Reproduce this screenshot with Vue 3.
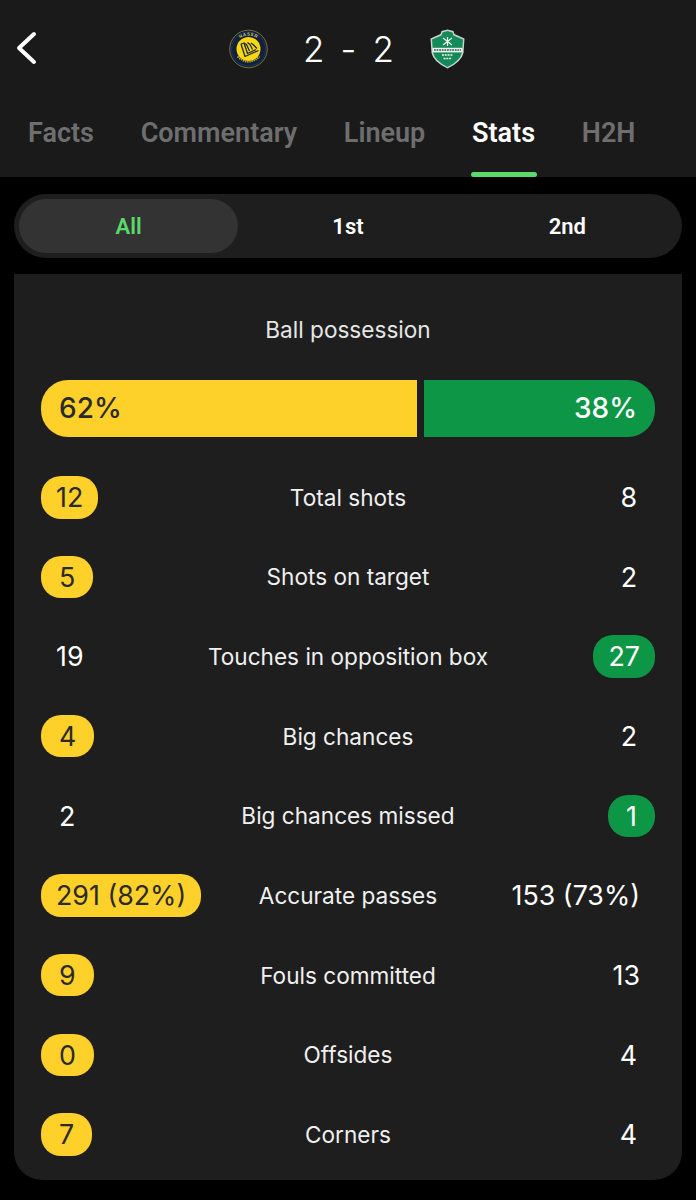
<script setup>
const tabs = [
  { label: 'Facts' },
  { label: 'Commentary' },
  { label: 'Lineup' },
  { label: 'Stats', active: true },
  { label: 'H2H' },
]
const periods = [{ label: 'All', active: true }, { label: '1st' }, { label: '2nd' }]
const rows = [
  { name: 'Total shots', home: '12', away: '8', win: 'home' },
  { name: 'Shots on target', home: '5', away: '2', win: 'home' },
  { name: 'Touches in opposition box', home: '19', away: '27', win: 'away' },
  { name: 'Big chances', home: '4', away: '2', win: 'home' },
  { name: 'Big chances missed', home: '2', away: '1', win: 'away' },
  { name: 'Accurate passes', home: '291 (82%)', away: '153 (73%)', win: 'home' },
  { name: 'Fouls committed', home: '9', away: '13', win: 'home' },
  { name: 'Offsides', home: '0', away: '4', win: 'home' },
  { name: 'Corners', home: '7', away: '4', win: 'home' },
]
</script>

<template>
  <div class="page">
    <header class="header">
      <div class="score-bar">
        <svg class="back" width="26" height="40" viewBox="0 0 26 40" fill="none">
          <path d="M20 6 L5 20 L20 34" stroke="#fff" stroke-width="4" stroke-linecap="round" stroke-linejoin="round" />
        </svg>
        <div class="score">
          <svg class="crest" width="40" height="40" viewBox="0 0 40 40">
            <circle cx="20" cy="20" r="18.800" fill="#13203a" stroke="#b9ab3a" stroke-width=".6" />
            <circle cx="20" cy="20" r="17" fill="none" stroke="#24406e" stroke-width=".6" />
            <circle cx="20" cy="20" r="12" fill="#fdd70f" />
            <path d="M12.500 15 L16.500 27.500 L30 21.500 M12.500 15 L15.500 14 L19 24.500 L27.500 20.500 M15.500 14 L18 15.500 L21 22 M19 13.500 L21.500 15.500 L24 20.500 M22.500 14 L24.500 15.500 L28.500 19.500"
              fill="none" stroke="#1c2a44" stroke-width="1.300" stroke-linejoin="round" />
            <path id="ringTop" d="M6.500 20 A13.500 13.500 0 0 1 33.500 20" fill="none" />
            <text class="ring-text" font-size="4.400" fill="#d8cf6a"><textPath href="#ringTop" startOffset="50%" text-anchor="middle">NASSR</textPath></text>
            <path d="M9 27.500 Q20 38 31 27.500" fill="none" stroke="#b9ab3a" stroke-width="1.800" stroke-dasharray="1.400 .8" />
          </svg>
          <div class="digits"><span>2</span><span>-</span><span>2</span></div>
          <svg class="crest" width="36" height="40" viewBox="0 0 36 40">
            <path d="M18 .5 L24 2 L25 5 L35 9.500 L34 24 Q32 33 18 39.500 Q4 33 2 24 L1 9.500 L11 5 L12 2 Z" fill="#c9d3cd" />
            <path d="M18 2 L23 3.500 L24 6.500 L33.500 10.500 L32.500 23.500 Q30.500 32 18 38 Q5.500 32 3.500 23.500 L2.500 10.500 L12 6.500 L13 3.500 Z" fill="#148a58" />
            <rect x="3" y="18.800" width="30" height="4.600" fill="#eef2ef" />
            <path d="M4.500 21 H31.500" stroke="#245c45" stroke-width="1.600" stroke-dasharray="1.800 .8" />
            <path d="M13.500 9 L22.500 16 M22.500 9 L13.500 16 M18 8 V17" stroke="#eef2ef" stroke-width="1.200" />
            <path d="M12.500 26 H23.500 M14 29.500 H22" stroke="#eef2ef" stroke-width="1.700" stroke-dasharray="2 .8" />
          </svg>
        </div>
      </div>
      <nav class="tabs">
        <div v-for="t in tabs" :key="t.label" class="tab" :class="{ 'tab-active': t.active }">{{ t.label }}</div>
      </nav>
    </header>

    <main class="content">
      <div class="periods">
        <div v-for="p in periods" :key="p.label" class="period" :class="{ 'period-active': p.active }">{{ p.label }}</div>
      </div>

      <section class="card">
        <h2 class="card-title">Ball possession</h2>
        <div class="possession">
          <div class="poss-home">62%</div>
          <div class="poss-away">38%</div>
        </div>
        <div class="rows">
          <div v-for="r in rows" :key="r.name" class="row">
            <div class="side side-home">
              <span class="val" :class="{ 'val-home': r.win === 'home', 'val-short': r.home.length === 1 }">{{ r.home }}</span>
            </div>
            <div class="name">{{ r.name }}</div>
            <div class="side side-away">
              <span class="val" :class="{ 'val-away': r.win === 'away', 'val-short': r.away.length === 1 }">{{ r.away }}</span>
            </div>
          </div>
        </div>
      </section>
    </main>
  </div>
</template>

<style>
html, body { margin: 0; background: #000; }
</style>

<style scoped>
.page {
  width: 696px;
  height: 1200px;
  overflow: hidden;
  background: #000;
  font-family: Inter, "Liberation Sans", sans-serif;
  color: #fff;
}
.header {
  height: 177px;
  background: #1a1a1a;
  display: flex;
  flex-direction: column;
}
.score-bar {
  position: relative;
  height: 97px;
  display: flex;
  justify-content: center;
  align-items: center;
}
.back { position: absolute; left: 14px; top: 28px; }
.score { display: flex; align-items: center; transform: translateX(-1.500px); }
.crest { display: block; }
.ring-text { font-family: "Liberation Sans", sans-serif; font-weight: 700; letter-spacing: .5px; }
.digits {
  width: 161px;
  display: flex;
  justify-content: center;
  gap: 16px;
  font-size: 35px;
  font-weight: 300;
  line-height: 40px;
}
.tabs {
  flex: 1;
  display: flex;
  padding-left: 28px;
  gap: 46.750px;
}
.tab {
  position: relative;
  font-size: 27px;
  font-weight: 600;
  color: #6e6e6e;
  line-height: 72px;
  height: 80px;
  font-family: Roboto, Inter, sans-serif;
}
.tab-active { color: #fff; }
.tab-active::after {
  content: "";
  position: absolute;
  left: -1px;
  right: -2px;
  bottom: 0;
  height: 5px;
  border-radius: 3px;
  background: #5bd96a;
}
.content { padding: 17px 14px 0; }
.periods {
  height: 64px;
  box-sizing: border-box;
  border-radius: 32px;
  background: #1e1e1e;
  padding: 5px;
  display: grid;
  grid-template-columns: 1fr 1fr 1fr;
  align-items: stretch;
}
.period {
  display: flex;
  align-items: center;
  justify-content: center;
  font-size: 22px;
  font-weight: 600;
  border-radius: 27px;
  font-family: Roboto, Inter, sans-serif;
}
.period-active { background: #333; color: #5bd96a; }
.card {
  margin-top: 16px;
  height: 906px;
  box-sizing: border-box;
  background: #1e1e1e;
  border-radius: 0 0 28px 28px;
  padding: 43px 27px 0;
}
.card-title {
  margin: 0;
  text-align: center;
  font-size: 22.600px;
  font-weight: 400;
  line-height: 26px;
  color: #e6e6e6;
}
.possession {
  margin-top: 37px;
  height: 56.500px;
  display: flex;
  gap: 7px;
  font-size: 28px;
  font-weight: 500;
}
.poss-home {
  flex: 0 0 376px;
  box-sizing: border-box;
  background: #fdd02a;
  color: #2a2a2a;
  border-radius: 27px 0 0 27px;
  padding-left: 18px;
  display: flex;
  align-items: center;
}
.poss-away {
  flex: 1;
  box-sizing: border-box;
  background: #0e9647;
  color: #fff;
  border-radius: 0 27px 27px 0;
  padding-right: 18px;
  display: flex;
  align-items: center;
  justify-content: flex-end;
}
.rows { margin-top: 21px; display: flex; flex-direction: column; }
.row {
  height: 79.650px;
  display: grid;
  grid-template-columns: 160px 1fr 160px;
  align-items: center;
}
.side { display: flex; }
.side-away { justify-content: flex-end; }
.val {
  font-size: 26.800px;
  line-height: 42.500px;
  padding: 0 15px;
  text-align: center;
  border-radius: 20px;
  white-space: nowrap;
}
.val-short { padding: 0 18px; }
.val-home { background: #fdd02a; color: #2a2a2a; }
.val-away { background: #0e9647; color: #fff; }
.name {
  text-align: center;
  font-size: 22.600px;
  color: #f0f0f0;
  white-space: nowrap;
}
</style>
